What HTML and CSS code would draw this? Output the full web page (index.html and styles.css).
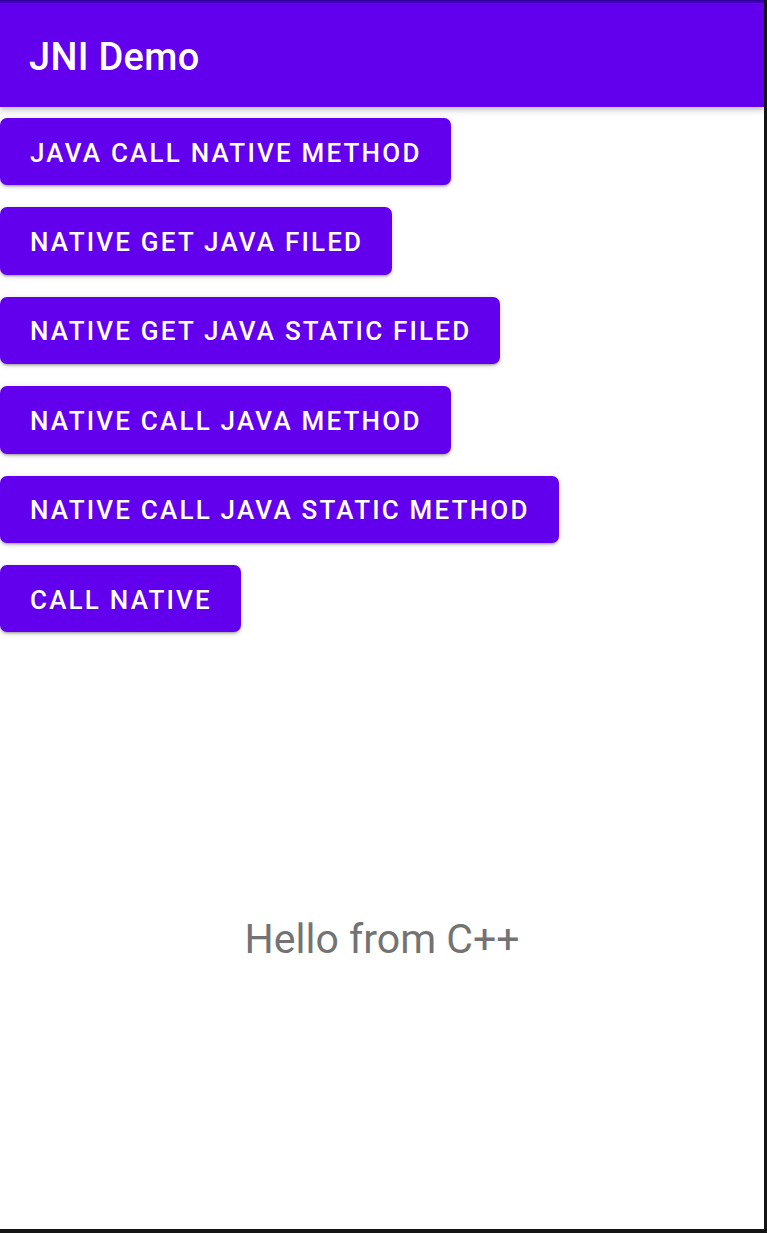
FILE: index.html
```html
<!DOCTYPE html>
<html>
<head>
<meta charset="utf-8">
<link rel="stylesheet" href="styles.css">
</head>
<body>
<div class="screen">
  <div class="statusbar"></div>
  <header class="toolbar"><h1 class="title">JNI Demo</h1></header>
  <main class="content">
    <div class="buttons">
      <button class="btn">Java call native method</button>
      <button class="btn">Native get java filed</button>
      <button class="btn">Native get java static filed</button>
      <button class="btn">Native call java method</button>
      <button class="btn">Native call java static method</button>
      <button class="btn">Call native</button>
    </div>
    <p class="hello">Hello from C++</p>
  </main>
</div>
</body>
</html>
```
FILE: styles.css
```css
html, body {
  margin: 0;
  padding: 0;
  background: #141414;
  width: 767px;
  height: 1233px;
  overflow: hidden;
}
.screen {
  width: 764px;
  height: 1229px;
  background: #ffffff;
  display: flex;
  flex-direction: column;
  font-family: Roboto, "Liberation Sans", sans-serif;
  overflow: hidden;
}
.statusbar {
  height: 3px;
  background: linear-gradient(#2c0099, #4a00cc);
  flex: none;
}
.toolbar {
  height: 104px;
  box-sizing: border-box;
  flex: none;
  background: #6200ee;
  display: flex;
  align-items: center;
  padding: 3px 0 0 29px;
  box-shadow: 0 4px 6px rgba(0,0,0,0.16), 0 2px 3px rgba(0,0,0,0.1);
  position: relative;
  z-index: 1;
}
.title {
  margin: 0;
  color: #ffffff;
  font-size: 38px;
  font-weight: 500;
  letter-spacing: 0.3px;
}
.content {
  flex: 1;
  display: flex;
  flex-direction: column;
}
.buttons {
  display: flex;
  flex-direction: column;
  align-items: flex-start;
  gap: 22px;
  padding-top: 11px;
}
.btn {
  height: 67.4px;
  border: none;
  border-radius: 7px;
  background: #6200ee;
  color: #ffffff;
  font-family: Roboto, "Liberation Sans", sans-serif;
  font-size: 26px;
  font-weight: 500;
  letter-spacing: 2.2px;
  text-transform: uppercase;
  padding: 2px 29px 0 30px;
  box-shadow: 0 3px 2px -2px rgba(0,0,0,0.2), 0 2px 3px 0 rgba(0,0,0,0.14), 0 1px 6px 0 rgba(0,0,0,0.12);
}
.hello {
  margin: 283px 0 0;
  text-align: center;
  font-size: 41px;
  line-height: 48px;
  color: #737373;
}
```
